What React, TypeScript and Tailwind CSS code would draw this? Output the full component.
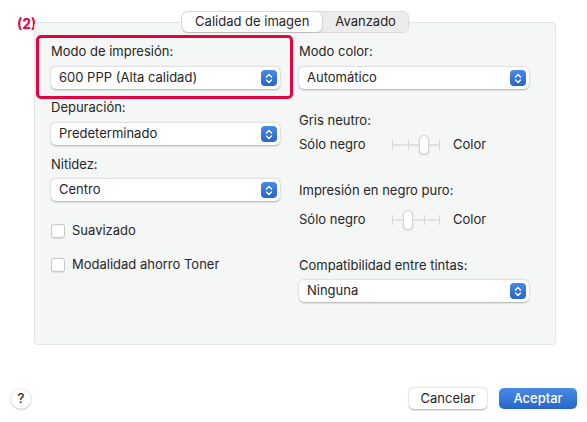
import React from "react";

const Stepper = () => (
  <div className="w-[16px] h-[16px] rounded-[4px] bg-gradient-to-b from-[#4a8ae6] to-[#2566c8] flex items-center justify-center">
    <svg width="8" height="11" viewBox="0 0 8 11" fill="none">
      <path d="M1.5 4 L4 1.5 L6.5 4" stroke="white" strokeWidth="1.4" strokeLinecap="round" strokeLinejoin="round" />
      <path d="M1.5 7 L4 9.5 L6.5 7" stroke="white" strokeWidth="1.4" strokeLinecap="round" strokeLinejoin="round" />
    </svg>
  </div>
);

const Select = ({ value, className = "" }: { value: string; className?: string }) => (
  <div
    className={`h-[22px] bg-white rounded-[5px] shadow-[0_0.5px_2px_rgba(0,0,0,0.3)] flex items-center justify-between pl-[8px] pr-[3px] ${className}`}
  >
    <span>{value}</span>
    <Stepper />
  </div>
);

const Label = ({ children, className = "" }: { children: React.ReactNode; className?: string }) => (
  <div className={`h-[16px] leading-[16px] ${className}`}>{children}</div>
);

const Checkbox = ({ label, className = "" }: { label: string; className?: string }) => (
  <div className={`flex items-center gap-[7px] h-[16px] ${className}`}>
    <div className="w-[14px] h-[14px] rounded-[3px] bg-white border border-[#c9c9c9] shadow-[0_0.5px_1px_rgba(0,0,0,0.1)]" />
    <span>{label}</span>
  </div>
);

// 4 ticks on the track, thumb sits on one of them
const Slider = ({ pos }: { pos: number }) => {
  const ticks = [0, 16, 32, 48];
  return (
    <div className="relative w-[48px] h-[20px]">
      <div className="absolute left-0 right-0 top-[9px] h-[2px] bg-[#e2e2e2]" />
      {ticks.map((t, i) =>
        i === pos ? null : (
          <div key={i} className="absolute top-[5px] w-[1px] h-[10px] bg-[#d6d6d6]" style={{ left: t - (i === 3 ? 1 : 0) }} />
        )
      )}
      <div
        className="absolute top-0 w-[10px] h-[20px] rounded-full bg-white border border-[#d4d4d4] shadow-[0_0.5px_1.5px_rgba(0,0,0,0.2)]"
        style={{ left: ticks[pos] - 5 }}
      />
    </div>
  );
};

const SliderRow = ({ pos, className = "" }: { pos: number; className?: string }) => (
  <div className={`flex items-center h-[20px] ${className}`}>
    <span className="w-[93px]">Sólo negro</span>
    <Slider pos={pos} />
    <span className="ml-[13px]">Color</span>
  </div>
);

export default function App() {
  return (
    <div
      className="relative w-[587px] h-[422px] bg-white text-[13px] text-[#262626] overflow-hidden"
      style={{ fontFamily: "Inter, 'Liberation Sans', sans-serif" }}
    >
      {/* annotation */}
      <div className="absolute left-[17px] top-[13px] text-[#e0053f] font-bold text-[14px]">(2)</div>

      <div className="pt-[11px] pl-[34px]">
        {/* tabs */}
        <div className="relative z-10 flex justify-center w-[522px]">
          <div className="flex h-[22px] rounded-[6px] border border-[#dcdcdc] bg-[#ececec]">
            <div className="px-[13px] flex items-center bg-white rounded-[6px] border-r border-[#d4d4d4] shadow-[0_0.5px_1px_rgba(0,0,0,0.15)]">
              Calidad de imagen
            </div>
            <div className="px-[12px] flex items-center">Avanzado</div>
          </div>
        </div>

        {/* panel */}
        <div className="relative -mt-[11px] w-[522px] h-[323px] bg-[#f5f6f6] border border-[#e4e4e4] rounded-[4px] pt-[20px] pl-[16px] flex gap-[19px]">
          {/* red highlight box */}
          <div className="absolute left-[1px] top-[12px] w-[257px] h-[64px] border-[3px] border-[#e0053f] rounded-[5px]" />

          <div className="w-[229px] flex flex-col">
            <Label>Modo de impresión:</Label>
            <Select value="600 PPP (Alta calidad)" className="mt-[8px]" />
            <Label className="mt-[10px]">Depuración:</Label>
            <Select value="Predeterminado" className="mt-[8px]" />
            <Label className="mt-[11px]">Nitidez:</Label>
            <Select value="Centro" className="mt-[7px]" />
            <Checkbox label="Suavizado" className="mt-[22px]" />
            <Checkbox label="Modalidad ahorro Toner" className="mt-[18px]" />
          </div>

          <div className="w-[230px] flex flex-col">
            <Label>Modo color:</Label>
            <Select value="Automático" className="mt-[8px]" />
            <Label className="mt-[23px]">Gris neutro:</Label>
            <SliderRow pos={2} className="mt-[7px]" />
            <Label className="mt-[27px]">Impresión en negro puro:</Label>
            <SliderRow pos={1} className="mt-[12px]" />
            <Label className="mt-[27px]">Compatibilidad entre tintas:</Label>
            <Select value="Ninguna" className="mt-[7px]" />
          </div>
        </div>
      </div>

      {/* bottom bar */}
      <div className="flex items-center mt-[43px] pl-[11px] pr-[10px]">
        <div className="w-[20px] h-[20px] rounded-full bg-white shadow-[0_0.5px_2px_rgba(0,0,0,0.35)] flex items-center justify-center text-[13px] font-medium">
          ?
        </div>
        <div className="ml-auto flex gap-[12px]">
          <div className="w-[78px] h-[21px] rounded-[5px] bg-white shadow-[0_0.5px_2px_rgba(0,0,0,0.35)] flex items-center justify-center">
            Cancelar
          </div>
          <div className="w-[78px] h-[21px] rounded-[5px] bg-gradient-to-b from-[#4a8ae6] to-[#2566c8] text-white font-medium flex items-center justify-center">
            Aceptar
          </div>
        </div>
      </div>
    </div>
  );
}
